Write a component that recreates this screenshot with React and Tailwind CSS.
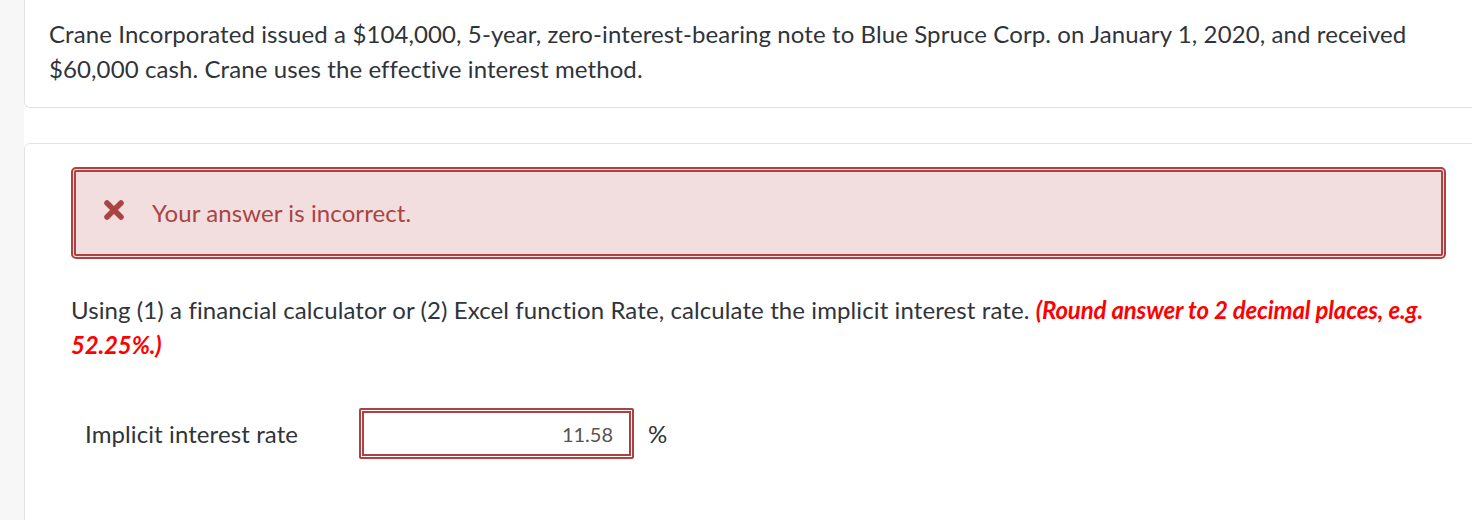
import React from "react";

export default function App() {
  return (
    <div
      className="flex h-[520px] w-[1472px] overflow-hidden bg-white text-[#2f343b]"
      style={{ fontFamily: "Lato, 'Open Sans', sans-serif" }}
    >
      <div className="w-[24px] shrink-0 bg-[#f7f7f7]" />
      <div className="flex min-w-0 flex-1 flex-col overflow-hidden">
        <div className="w-[1480px] shrink-0 rounded-b-[6px] border border-t-0 border-[#e3e3e3] bg-white pl-6 pr-10 pt-[16px] pb-[21px] text-[24px] leading-[35px] tracking-[0.1px]">
          Crane Incorporated issued a $104,000, 5-year, zero-interest-bearing note to Blue Spruce Corp. on January 1, 2020, and received $60,000 cash. Crane uses the effective interest method.
        </div>
        <div className="mt-[35px] h-[600px] w-[1480px] shrink-0 rounded-t-[6px] border border-[#e3e3e3] bg-white pl-[46px] pt-[23px]">
          <div className="flex h-[92px] w-[1375px] items-center rounded-[5px] border-[5px] border-double border-[#ae4141] bg-[#f2dede] pl-[27px]">
            <svg width="22" height="22" viewBox="0 0 22 22" className="mt-[-6px]">
              <path d="M4 4 L18 18 M18 4 L4 18" stroke="#a94442" strokeWidth="5.5" strokeLinecap="round" />
            </svg>
            <span className="ml-[27px] text-[24px] tracking-[0.1px] text-[#a94442]">Your answer is incorrect.</span>
          </div>
          <p className="mt-[33px] w-[1375px] text-[24px] leading-[35px] tracking-[0.1px]">
            Using (1) a financial calculator or (2) Excel function Rate, calculate the implicit interest rate.{" "}
            <span className="font-bold italic tracking-[-0.15px] text-[#ff0000]">(Round answer to 2 decimal places, e.g. 52.25%.)</span>
          </p>
          <div className="mt-[46px] flex items-center pl-[14px]">
            <span className="w-[274px] text-[24px] tracking-[0.1px]">Implicit interest rate</span>
            <div className="flex h-[51px] w-[275px] items-center justify-end rounded-[2px] border-[5px] border-double border-[#ae4141] bg-white pr-[16px] text-[20px] text-[#555555]">
              11.58
            </div>
            <span className="ml-[14px] text-[24px]">%</span>
          </div>
        </div>
      </div>
    </div>
  );
}
